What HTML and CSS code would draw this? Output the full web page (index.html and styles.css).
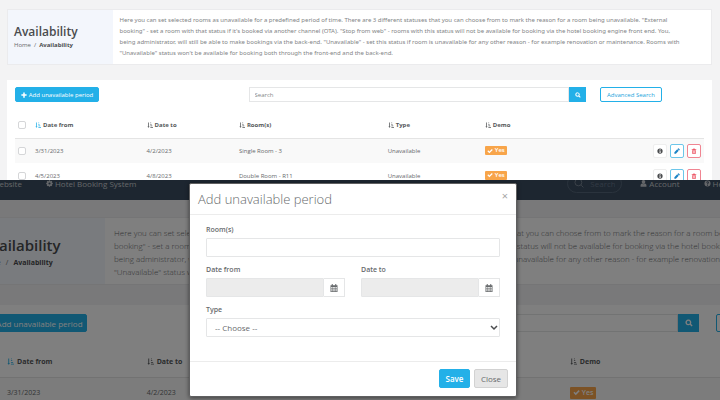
FILE: index.html
```html
<!DOCTYPE html>
<html lang="en">
<head>
<meta charset="utf-8">
<title>Availability</title>
<link rel="stylesheet" href="styles.css">
</head>
<body>
<svg class="sprite" aria-hidden="true">
  <symbol id="plus" viewBox="0 0 16 16"><path d="M6 1h4v5h5v4h-5v5H6v-5H1V6h5z"/></symbol>
  <symbol id="search" viewBox="0 0 16 16"><path fill-rule="evenodd" d="M6.8 1a5.8 5.8 0 1 0 3 10.7l3.4 3.4 2-2-3.4-3.4A5.8 5.8 0 0 0 6.800 1zm0 2.600a3.200 3.200 0 1 1 0 6.400 3.200 3.200 0 0 1 0-6.400z"/></symbol>
  <symbol id="lens" viewBox="0 0 16 16"><path fill="none" stroke="currentColor" stroke-width="1.500" d="M11.500 11.500 15 15M12.500 7a5.500 5.500 0 1 1-11 0 5.500 5.500 0 0 1 11 0z"/></symbol>
  <symbol id="sort" viewBox="0 0 16 16"><path d="M3 1h2v11h2l-3 3.500L1 12h2zM9 1h2v2H9zM9 5h3v2H9zM9 9h5v2H9zM9 13h7v2H9z"/></symbol>
  <symbol id="check" viewBox="0 0 16 16"><path d="M1 8.500 3.300 6l3 3L13 2.500 15.300 5l-9 9z"/></symbol>
  <symbol id="info" viewBox="0 0 16 16"><path fill-rule="evenodd" d="M8 1a7 7 0 1 0 0 14A7 7 0 0 0 8 1zM7 3h2.500v2H7zM6 6.500h3.500V11h1v1.500H6V11h1V8H6z"/></symbol>
  <symbol id="pencil" viewBox="0 0 16 16"><path d="M1 15v-4l7.500-7.500 4 4L5 15zM9.500 2.500l1.500-1.500q1-.8 2 0l2 2q.8 1 0 2l-1.500 1.500z"/></symbol>
  <symbol id="trash" viewBox="0 0 16 16"><path fill-rule="evenodd" d="M2 3h3.500l1-2h3l1 2H14v2H2zM3 6h10v9H3zM5 7.500V13h1.200V7.500zm2.400 0V13h1.200V7.500zm2.400 0V13H11V7.500z"/></symbol>
  <symbol id="cog" viewBox="0 0 16 16"><path fill="none" stroke="currentColor" stroke-width="3.500" d="M12.200 8a4.200 4.200 0 1 1-8.400 0 4.200 4.200 0 0 1 8.400 0z"/><path fill="none" stroke="currentColor" stroke-width="3" d="M8 .5v3M8 12.500v3M.5 8h3M12.500 8h3M2.700 2.700l2 2M11.300 11.300l2 2M2.700 13.300l2-2M11.300 4.700l2-2"/></symbol>
  <symbol id="user" viewBox="0 0 16 16"><path d="M8 0a4 4 0 0 1 4 4.500Q11.500 9 8 9T4 4.500A4 4 0 0 1 8 0zM4.500 8Q8 11.500 11.500 8q3.500.5 3.500 5.500 0 2-2 2H3q-2 0-2-2Q1 8.500 4.500 8z"/></symbol>
  <symbol id="help" viewBox="0 0 16 16"><path fill-rule="evenodd" d="M8 1a7 7 0 1 0 0 14A7 7 0 0 0 8 1zM5 5.500Q5.500 3 8 3q3.200.2 3.200 3 0 1.500-2 2.600V9.500H7V8q2-1 2-2 0-1-1-1T6.700 6.300zM7 10.700h2.200V13H7z"/></symbol>
  <symbol id="calendar" viewBox="0 0 16 16"><path fill-rule="evenodd" d="M1 2.500h2.500V0h2v2.500h5V0h2v2.500H15V16H1zM2.500 6v2h2.300V6zm3.300 0v2h1.800V6zm2.700 0v2h1.800V6zm2.800 0v2h2.200V6zM2.500 9v2.300h2.300V9zm3.300 0v2.300h1.800V9zm2.700 0v2.300h1.800V9zm2.800 0v2.300h2.200V9zM2.500 12.300v2.200h2.300v-2.200zm3.300 0v2.200h1.800v-2.200zm2.700 0v2.200h1.800v-2.200zm2.800 0v2.200h2.200v-2.200z"/></symbol>
</svg>

<section class="scene scene-list">
  <div class="page">
    <header class="hero">
      <div class="hero-title">
        <h1>Availability</h1>
        <nav class="crumbs"><a href="#">Home</a><span>/</span><strong>Availability</strong></nav>
      </div>
      <p class="hero-text">Here you can set selected rooms as unavailable for a predefined period of time. There are 3 different statuses that you can choose from to mark the reason for a room being unavailable. "External<br>booking" - set a room with that status if it's booked via another channel (OTA). "Stop from web" - rooms with this status will not be available for booking via the hotel booking engine front end. You,<br>being administrator, will still be able to make bookings via the back-end. "Unavailable" - set this status if room is unavailable for any other reason - for example renovation or maintenance. Rooms with<br>"Unavailable" status won't be available for booking both through the front-end and the back-end.</p>
    </header>
    <main class="panel">
      <div class="toolbar">
        <button class="btn btn-primary" type="button"><svg class="icon"><use href="#plus"/></svg>Add unavailable period</button>
        <form class="search">
          <input type="text" placeholder="Search" aria-label="Search">
          <button class="btn-search" type="button" aria-label="Search"><svg class="icon"><use href="#search"/></svg></button>
        </form>
        <button class="btn btn-outline" type="button">Advanced Search</button>
      </div>
      <table class="grid">
        <thead>
          <tr>
            <th class="c-check"><input type="checkbox" aria-label="Select all"></th>
            <th class="c-from"><svg class="icon sorted"><use href="#sort"/></svg>Date from</th>
            <th class="c-to"><svg class="icon"><use href="#sort"/></svg>Date to</th>
            <th class="c-room"><svg class="icon"><use href="#sort"/></svg>Room(s)</th>
            <th class="c-type"><svg class="icon"><use href="#sort"/></svg>Type</th>
            <th class="c-demo"><svg class="icon"><use href="#sort"/></svg>Demo</th>
            <th></th>
          </tr>
        </thead>
        <tbody>
          <tr>
            <td><input type="checkbox" aria-label="Select row"></td>
            <td>3/31/2023</td><td>4/2/2023</td><td>Single Room - 3</td><td>Unavailable</td>
            <td><span class="badge"><svg class="icon"><use href="#check"/></svg>Yes</span></td>
            <td><div class="actions">
              <button class="act act-info" type="button" aria-label="Details"><svg class="icon"><use href="#info"/></svg></button>
              <button class="act act-edit" type="button" aria-label="Edit"><svg class="icon"><use href="#pencil"/></svg></button>
              <button class="act act-delete" type="button" aria-label="Delete"><svg class="icon"><use href="#trash"/></svg></button>
            </div></td>
          </tr>
          <tr>
            <td><input type="checkbox" aria-label="Select row"></td>
            <td>4/5/2023</td><td>4/8/2023</td><td>Double Room - R11</td><td>Unavailable</td>
            <td><span class="badge"><svg class="icon"><use href="#check"/></svg>Yes</span></td>
            <td><div class="actions">
              <button class="act act-info" type="button" aria-label="Details"><svg class="icon"><use href="#info"/></svg></button>
              <button class="act act-edit" type="button" aria-label="Edit"><svg class="icon"><use href="#pencil"/></svg></button>
              <button class="act act-delete" type="button" aria-label="Delete"><svg class="icon"><use href="#trash"/></svg></button>
            </div></td>
          </tr>
        </tbody>
      </table>
    </main>
  </div>
</section>

<section class="scene scene-modal">
  <div class="page">
    <nav class="topbar">
      <div class="topbar-start">
        <a href="#">Website</a>
        <a href="#"><svg class="icon"><use href="#cog"/></svg>Hotel Booking System</a>
      </div>
      <label class="pill"><svg class="icon"><use href="#lens"/></svg><input type="text" placeholder="Search" aria-label="Search site"></label>
      <a href="#"><svg class="icon"><use href="#user"/></svg>Account</a>
      <a href="#" class="help"><svg class="icon"><use href="#help"/></svg>Help</a>
    </nav>
    <header class="hero">
      <div class="hero-title">
        <h1>Availability</h1>
        <nav class="crumbs"><a href="#">Home</a><span>/</span><strong>Availability</strong></nav>
      </div>
      <p class="hero-text">Here you can set selected rooms as unavailable for a predefined period of time. There are 3 different statuses that you can choose from to mark the reason for a room being unavailable. "External<br>booking" - set a room with that status if it's booked via another channel (OTA). "Stop from web" - rooms with this status will not be available for booking via the hotel booking engine front end. You,<br>being administrator, will still be able to make bookings via the back-end. "Unavailable" - set this status if room is unavailable for any other reason - for example renovation or maintenance. Rooms with<br>"Unavailable" status won't be available for booking both through the front-end and the back-end.</p>
    </header>
    <div class="panel">
      <div class="toolbar">
        <button class="btn btn-primary" type="button"><svg class="icon"><use href="#plus"/></svg>Add unavailable period</button>
        <form class="search">
          <input type="text" placeholder="Search" aria-label="Search">
          <button class="btn-search" type="button" aria-label="Search"><svg class="icon"><use href="#search"/></svg></button>
        </form>
        <button class="btn btn-outline" type="button">Advanced Search</button>
      </div>
      <table class="grid">
        <thead>
          <tr>
            <th class="c-check"><input type="checkbox" aria-label="Select all"></th>
            <th class="c-from"><svg class="icon sorted"><use href="#sort"/></svg>Date from</th>
            <th class="c-to"><svg class="icon"><use href="#sort"/></svg>Date to</th>
            <th class="c-room"><svg class="icon"><use href="#sort"/></svg>Room(s)</th>
            <th class="c-type"><svg class="icon"><use href="#sort"/></svg>Type</th>
            <th class="c-demo"><svg class="icon"><use href="#sort"/></svg>Demo</th>
            <th></th>
          </tr>
        </thead>
        <tbody>
          <tr>
            <td><input type="checkbox" aria-label="Select row"></td>
            <td>3/31/2023</td><td>4/2/2023</td><td>Single Room - 3</td><td>Unavailable</td>
            <td><span class="badge"><svg class="icon"><use href="#check"/></svg>Yes</span></td>
            <td></td>
          </tr>
        </tbody>
      </table>
    </div>
  </div>
  <div class="backdrop">
    <div class="modal" role="dialog" aria-labelledby="modal-title">
      <header class="modal-head">
        <h2 id="modal-title">Add unavailable period</h2>
        <button class="close" type="button" aria-label="Dismiss">×</button>
      </header>
      <form class="modal-body">
        <div class="field">
          <label for="rooms">Room(s)</label>
          <input id="rooms" type="text">
        </div>
        <div class="dates">
          <div class="field">
            <label for="from">Date from</label>
            <div class="date"><input id="from" type="text" readonly><button type="button" aria-label="Pick start date"><svg class="icon"><use href="#calendar"/></svg></button></div>
          </div>
          <div class="field">
            <label for="to">Date to</label>
            <div class="date"><input id="to" type="text" readonly><button type="button" aria-label="Pick end date"><svg class="icon"><use href="#calendar"/></svg></button></div>
          </div>
        </div>
        <div class="field">
          <label for="type">Type</label>
          <div class="select">
            <select id="type"><option>-- Choose --</option></select>
            <svg class="chevron" viewBox="0 0 8 6"><path d="M1 1l3 3 3-3"/></svg>
          </div>
        </div>
      </form>
      <footer class="modal-foot">
        <button class="btn-save" type="button">Save</button>
        <button class="btn-close" type="button">Close</button>
      </footer>
    </div>
  </div>
</section>
</body>
</html>
```

FILE: styles.css
```css
* { box-sizing: border-box; }

body {
  margin: 0;
  min-height: 100vh;
  display: flex;
  flex-direction: column;
  overflow: hidden;
  font-family: "Open Sans", "Noto Sans", sans-serif;
  color: #676a6c;
  background: #f3f3f4;
}

button, input, select { font: inherit; color: inherit; margin: 0; min-width: 0; }
button { cursor: pointer; }
a { color: inherit; text-decoration: none; }
h1, h2, p { margin: 0; }

.sprite { position: absolute; width: 0; height: 0; }
.icon { width: 1em; height: 1em; fill: currentColor; flex: none; }

.scene { position: relative; overflow: hidden; }
.page { font-size: var(--text); }

.scene-list {
  --text: 6px;
  --tools: 6px;
  --title: 12px;
  --copy: 6px;
  --line: 11px;
  --control: 15px;
  height: 180px;
}
.scene-list .page { padding: 9px 8px 0 7px; }

.scene-modal {
  --text: 7px;
  --tools: 8px;
  --title: 15px;
  --copy: 8px;
  --line: 13px;
  --control: 18px;
  flex: 1;
  min-height: 220px;
}
.scene-modal .page { width: 122.500%; margin-left: -28px; }

/* page heading */
.hero {
  display: flex;
  background: #fff;
  border: 1px solid #ebebed;
  overflow: hidden;
}
.hero-title {
  flex: 0 0 15%;
  display: flex;
  flex-direction: column;
  justify-content: center;
  padding-left: 6px;
  background: #f3f6fc;
}
.hero-title h1 { font-size: var(--title); line-height: 16px; font-weight: 600; color: #4a4c4e; }
.crumbs { display: flex; gap: 3px; line-height: 11px; }
.crumbs strong { color: #4a4c4e; }
.hero-text {
  padding: 5px 6px;
  font-size: var(--copy);
  line-height: var(--line);
  white-space: nowrap;
}
.scene-list .hero-text { font-family: "Noto Sans", "Open Sans", sans-serif; color: #828486; }
.scene-modal .hero-title { padding-left: 8px; }
.scene-modal .hero-title h1 { line-height: 22px; }
.scene-modal .crumbs { gap: 5px; line-height: 13px; }
.scene-modal .hero-text { padding: 8px 9px 6px; font-weight: 300; }

/* content panel */
.panel { margin-top: 15px; padding: 7px 8px 0; background: #fff; }
.scene-modal .panel { margin-top: 20px; padding: 9px 10px 0; }
.toolbar { display: flex; align-items: center; font-size: var(--tools); }
.btn {
  display: flex;
  align-items: center;
  justify-content: center;
  gap: 2px;
  height: var(--control);
  padding: 0 4px;
  border: 1px solid #23b0e8;
  border-radius: 2px;
  white-space: nowrap;
}
.btn-primary { flex: 0 0 12.200%; color: #fff; background: #23b0e8; }
.btn-outline { flex: 0 0 9%; margin-left: 2%; color: #23a5dc; background: #fff; }
.search { display: flex; flex: 0 0 49%; margin-left: 21.700%; }
.scene-modal .search { margin-left: 22%; }
.search input {
  flex: 1;
  height: var(--control);
  padding: 0 5px;
  border: 1px solid #e5e6e7;
  background: #fff;
}
::placeholder { color: #858789; opacity: 1; }
.btn-search {
  display: flex;
  align-items: center;
  justify-content: center;
  flex: 0 0 5%;
  padding: 0;
  border: 0;
  color: #fff;
  background: #23b0e8;
}
.scene-modal .btn-search { flex-basis: 21px; }

.grid { width: 100%; margin-top: 11px; border-collapse: collapse; table-layout: fixed; }
.scene-modal .grid { margin-top: 14px; }
.grid th, .grid td { height: 25px; padding: 0; text-align: left; white-space: nowrap; vertical-align: middle; }
.scene-modal .grid th, .scene-modal .grid td { height: 31px; }
.grid th { color: #55585a; font-weight: 700; border-bottom: 1px solid #e4e4e4; }
.grid th .icon { margin-right: 2px; vertical-align: -1px; }
.scene-modal .grid th .icon { margin-right: 3px; }
.grid .sorted { color: #23b0e8; }
.grid tbody tr:nth-child(odd) { background: #f9f9f9; }
.grid input {
  appearance: none;
  display: block;
  width: 8px;
  height: 8px;
  margin-left: 3px;
  border: 1px solid #d5d6d8;
  border-radius: 2px;
  background: #fff;
}
.c-check { width: 2.900%; }
.c-from { width: 16.200%; }
.c-to { width: 13.400%; }
.c-room { width: 21.600%; }
.c-type { width: 14.100%; }
.c-demo { width: 12%; }
.badge {
  display: inline-flex;
  align-items: center;
  gap: 2px;
  padding: 0 2px;
  line-height: 9px;
  border-radius: 1px;
  font-weight: 600;
  color: #fff;
  background: #f8a54a;
}
.scene-modal .badge { padding: 0 3px; line-height: 12px; }
.actions { display: flex; justify-content: flex-end; gap: 3px; padding-right: 3px; }
.act {
  display: flex;
  align-items: center;
  justify-content: center;
  width: 14px;
  height: 14px;
  padding: 0;
  border: 1px solid;
  border-radius: 2px;
  background: #fff;
}
.act .icon { width: 6px; height: 6px; }
.act-info { border-color: #eee; color: #4a4c4e; }
.act-edit { border-color: #6cc6ea; color: #1c84c6; }
.act-delete { border-color: #f08592; color: #ed5565; }

/* application bar */
.topbar {
  display: flex;
  align-items: center;
  height: 34px;
  margin: -14px 0 17px;
  font-size: 8px;
  color: #c9cdd2;
  background: #3a4c60;
}
.topbar a { display: flex; align-items: center; gap: 2px; white-space: nowrap; }
.topbar .icon { width: 7px; height: 7px; }
.topbar-start { display: flex; gap: 24px; flex: 0 0 67.500%; padding-left: 20px; }
.pill {
  display: flex;
  align-items: center;
  gap: 6px;
  flex: 0 0 55px;
  height: 19px;
  margin-right: 18px;
  padding: 0 6px;
  border: 1px solid #55677a;
  border-radius: 10px;
  color: #7b8795;
}
.topbar .pill .icon { width: 10px; height: 10px; }
.pill input { width: 100%; padding: 0; border: 0; background: none; }
.pill ::placeholder { color: #65758a; }
.topbar .help { margin-left: 24px; }

/* dialog */
.backdrop {
  position: absolute;
  inset: 0;
  display: flex;
  justify-content: center;
  align-items: flex-start;
  padding: 3px 14px 0 0;
  background: rgba(0, 0, 0, .5);
}
.modal {
  width: 100%;
  max-width: 328px;
  font-size: 8px;
  background: #fff;
  border: 1px solid #5f5f60;
  border-radius: 2px;
  box-shadow: 0 1px 4px rgba(0, 0, 0, .5);
}
.modal-head {
  display: flex;
  justify-content: space-between;
  align-items: center;
  height: 31px;
  padding: 0 8px;
  border-bottom: 1px solid #ececec;
}
.modal-head h2 { font-size: 13px; line-height: 20px; font-weight: 300; }
.close { padding: 0 0 6px; border: 0; background: none; font-size: 11px; line-height: 12px; color: #a5a5a5; }
.modal-body { display: flex; flex-direction: column; gap: 7px; padding: 9px 16px 24px; }
.field label { display: block; margin-bottom: 2px; font-size: 7px; line-height: 12px; font-weight: 600; }
.field input, .field select {
  display: block;
  width: 100%;
  height: 19px;
  padding: 0 8px;
  border: 1px solid #e5e6e7;
  border-radius: 1px;
  background: #fff;
}
.dates { display: grid; grid-template-columns: 1fr 1fr; gap: 16px; }
.date { display: flex; }
.field .date input { flex: 1; background: #ececec; }
.date button {
  display: flex;
  align-items: center;
  justify-content: center;
  width: 21px;
  padding: 0;
  border: 1px solid #e5e6e7;
  border-left: 0;
  background: #fff;
}
.select { position: relative; }
.field select { appearance: none; }
.chevron {
  position: absolute;
  right: 2px;
  top: 7px;
  width: 8px;
  height: 6px;
  fill: none;
  stroke: #4a4c4e;
  stroke-width: 1.500;
  pointer-events: none;
}
.modal-foot {
  display: flex;
  justify-content: flex-end;
  gap: 4px;
  padding: 7px 8px 8px;
  border-top: 1px solid #ececec;
}
.modal-foot button { height: 19px; padding: 0; border-radius: 2px; }
.btn-save { width: 31px; border: 1px solid #23b0e8; color: #fff; background: #23b0e8; font-weight: 600; }
.btn-close { width: 34px; border: 1px solid #d2d2d2; background: #e6e6e6; }
```
